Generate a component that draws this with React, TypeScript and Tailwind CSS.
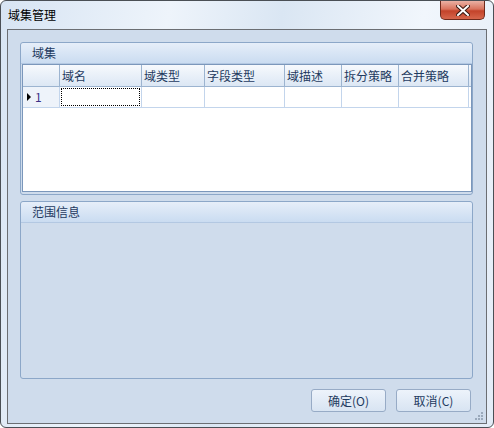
import React from 'react';

const font = { fontFamily: '"Noto Sans CJK SC", "Liberation Sans", sans-serif' };

const columns = [
  { name: '域名', w: 'w-[82px]' },
  { name: '域类型', w: 'w-[63px]' },
  { name: '字段类型', w: 'w-[80px]' },
  { name: '域描述', w: 'w-[57px]' },
  { name: '拆分策略', w: 'w-[57px]' },
  { name: '合并策略', w: 'w-[70px]' },
];

const GroupHeader = ({ title }: { title: string }) => (
  <div className="h-[21px] shrink-0 flex items-center pl-[11px] text-[12px] text-[#1e3a60] bg-[linear-gradient(to_bottom,#e6eef9,#cadcf1)] border-b border-[#b3c8e2] rounded-t-[3px]">
    {title}
  </div>
);

const CloseButton = () => (
  <div className="absolute top-0 right-[8px] w-[45px] h-[19px] rounded-b-[5px] border border-t-0 border-[#6e2a1c] bg-[linear-gradient(to_bottom,#eab1a4_0%,#d9735d_45%,#c3432a_55%,#d6664c_100%)] flex items-center justify-center">
    <svg width="14" height="11" viewBox="0 0 14 11">
      <path d="M2 1 L12 10 M12 1 L2 10" stroke="#3b1a12" strokeWidth="4" strokeLinecap="square" />
      <path d="M2 1 L12 10 M12 1 L2 10" stroke="#ffffff" strokeWidth="2" strokeLinecap="square" />
    </svg>
  </div>
);

const DialogButton = ({ label }: { label: string }) => (
  <button className="w-[75px] h-[23px] rounded-[3px] border border-[#97abc6] bg-[linear-gradient(to_bottom,#edf3fb,#d8e4f2)] text-[12px] text-[#1e3a60] flex items-center justify-center">
    {label}
  </button>
);

export default function App() {
  return (
    <div style={font} className="w-[494px] h-[428px] bg-white">
      <div className="relative w-[494px] h-[428px] rounded-[6px] border border-[#4a4f55] bg-[linear-gradient(100deg,#d7e4f3_0%,#eef4fb_30%,#dae6f3_50%,#f1f6fc_75%,#e3ecf7_100%)] flex flex-col pl-[6px] pr-[6px] pb-[3px]">
        <div className="h-[28px] shrink-0 flex items-center pl-[1px] text-[12px] text-black">域集管理</div>
        <CloseButton />

        <div className="flex-1 border border-[#6b6e73] bg-[#cfdcec] flex flex-col pt-[12px] pl-[12px] pr-[13px] pb-[10px]">
          {/* 域集 */}
          <div className="h-[153px] shrink-0 border border-[#8ca7c8] rounded-[3px] flex flex-col">
            <GroupHeader title="域集" />
            <div className="flex-1 ml-[1px] mb-[2px] border border-[#7b97bb] bg-white flex flex-col">
              <div className="h-[22px] flex border-b border-[#9cb4d0] bg-[linear-gradient(to_bottom,#f6f9fd,#dce7f4)] text-[12px] text-[#1e3a60]">
                <div className="w-[37px] border-r border-[#9cb4d0]" />
                {columns.map((c) => (
                  <div key={c.name} className={`${c.w} border-r border-[#9cb4d0] flex items-center pl-[2px]`}>
                    {c.name}
                  </div>
                ))}
              </div>
              <div className="h-[21px] flex border-b border-[#c3d5ec] text-[12px]">
                <div className="w-[37px] border-r border-[#c3d5ec] bg-[#eef3fa] flex items-center pl-[4px] gap-[4px]">
                  <svg width="4" height="8" viewBox="0 0 4 8">
                    <path d="M0 0 L4 4 L0 8 Z" fill="#000" />
                  </svg>
                  <span className="text-[#3c2f86]">1</span>
                </div>
                {columns.map((c, i) => (
                  <div key={c.name} className={`${c.w} border-r border-[#c3d5ec] p-[1px]`}>
                    {i === 0 && <div className="w-full h-full border border-dotted border-black" />}
                  </div>
                ))}
              </div>
            </div>
          </div>

          {/* 范围信息 */}
          <div className="mt-[6px] h-[178px] shrink-0 border border-[#8ca7c8] rounded-[3px] flex flex-col">
            <GroupHeader title="范围信息" />
            <div className="flex-1" />
          </div>

          <div className="mt-[10px] flex justify-end gap-[10px] pr-[2px]">
            <DialogButton label="确定(O)" />
            <DialogButton label="取消(C)" />
          </div>
        </div>

        <div className="absolute right-[10px] bottom-[7px] grid grid-cols-3 gap-[1px]">
          {[0, 0, 1, 0, 1, 1, 1, 1, 1].map((v, i) => (
            <div key={i} className={`w-[2px] h-[2px] ${v ? 'bg-[#9aa9bb]' : ''}`} />
          ))}
        </div>
      </div>
    </div>
  );
}
